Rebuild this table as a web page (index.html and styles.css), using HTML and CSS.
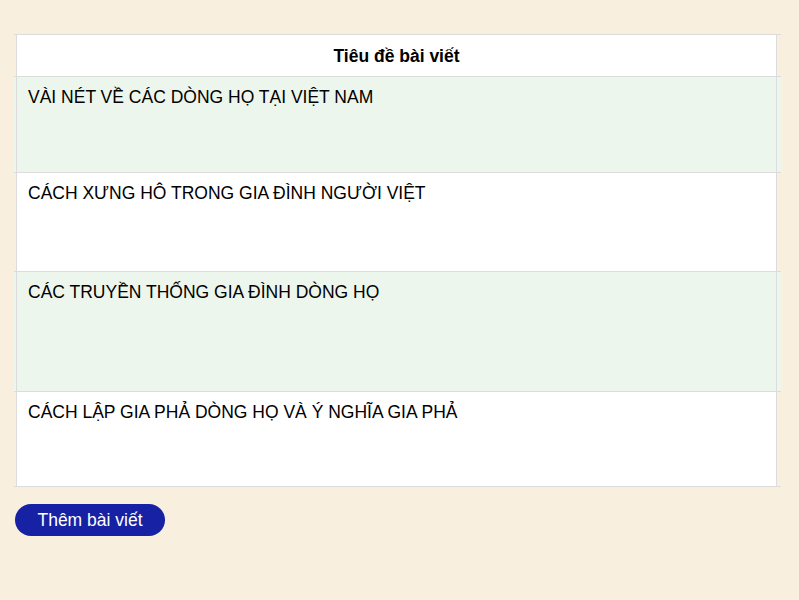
FILE: index.html
```html
<!DOCTYPE html>
<html lang="vi">
<head>
  <meta charset="UTF-8" />
  <meta name="viewport" content="width=device-width, initial-scale=1.0"/>
  <title>Danh sách bài viết</title>
  <link rel="stylesheet" href="styles.css">
</head>
<body>
  <div class="page">
    <div class="posts">
      <div class="row head">
        <div class="cell">Tiêu đề bài viết</div>
      </div>
      <div class="row odd size-a">
        <div class="cell">VÀI NÉT VỀ CÁC DÒNG HỌ TẠI VIỆT NAM</div>
      </div>
      <div class="row size-b">
        <div class="cell">CÁCH XƯNG HÔ TRONG GIA ĐÌNH NGƯỜI VIỆT</div>
      </div>
      <div class="row odd size-c">
        <div class="cell">CÁC TRUYỀN THỐNG GIA ĐÌNH DÒNG HỌ</div>
      </div>
      <div class="row size-d">
        <div class="cell">CÁCH LẬP GIA PHẢ DÒNG HỌ VÀ Ý NGHĨA GIA PHẢ</div>
      </div>
    </div>

    <button class="add-btn">Thêm bài viết</button>
  </div>
</body>
</html>
```

FILE: styles.css
```css
* { box-sizing: border-box; }
body {
  margin: 0;
  font-family: 'Liberation Sans', Arial, sans-serif;
  background-color: #f8efdf;
  color: #000;
}

.page {
  padding: 34px 0 0 14px;
}

.posts {
  width: 767px;
}

.row {
  border-bottom: 1px solid #dcdcdc;
}

.row.head { border-top: 1px solid #dcdcdc; }

.row.odd { background: #edf6ec; }

.cell {
  margin: 0 4px 0 2px;
  border-left: 1px solid #dcdcdc;
  border-right: 1px solid #dcdcdc;
  background: white;
  padding: 10px 11px;
  font-size: 17.5px;
  line-height: 20px;
}

.row.odd .cell { background: transparent; }

.head .cell {
  text-align: center;
  font-weight: bold;
  height: 41px;
  padding-top: 11px;
}

.size-a .cell { height: 95px; }
.size-b .cell { height: 98px; }
.size-c .cell { height: 119px; }
.size-d .cell { height: 94px; }

.add-btn {
  margin-top: 17px;
  margin-left: 1px;
  width: 150px;
  height: 32px;
  background: #1721a3;
  color: white;
  border: none;
  border-radius: 16px;
  font-family: inherit;
  font-size: 17.5px;
  cursor: pointer;
}

.add-btn:hover { background: #0f1780; }
```
